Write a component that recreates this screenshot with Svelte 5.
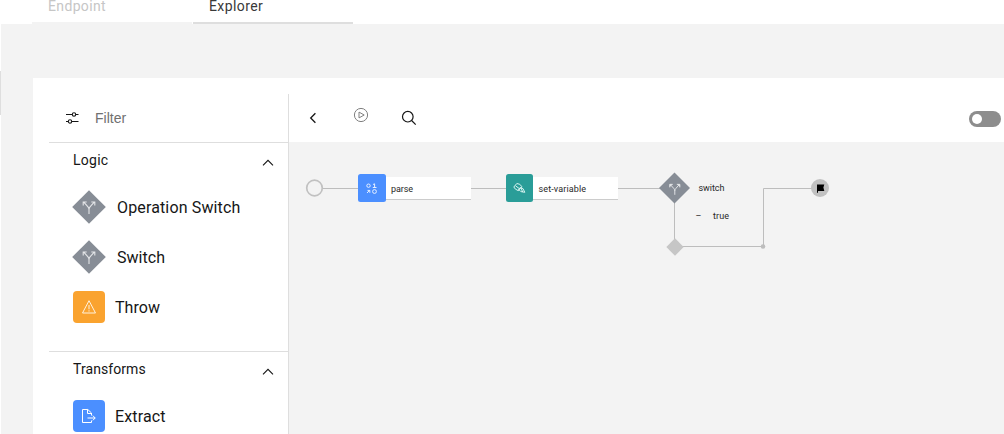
<script>
  const sections = [
    {
      title: 'Logic',
      spacing: 0.25,
      items: [
        { label: 'Operation Switch', icon: 'switch', spacing: 0.14 },
        { label: 'Switch', icon: 'switch', spacing: 0.05 },
        { label: 'Throw', icon: 'throw', spacing: 0.05 }
      ]
    },
    { title: 'Transforms', spacing: 0.08, items: [{ label: 'Extract', icon: 'extract', spacing: 0.15 }] }
  ];
</script>

{#snippet fork()}
  <path d="M0 7V2.5Q0 1 -1.2 -.3L-5 -4.6M0 2.5Q0 1 1.2 -.3L5 -4.6M-5.8 -1.5V-5H-2.3M2.3 -5H5.8V-1.5" fill="none" stroke="#e4e6e8" stroke-width="1.1" />
{/snippet}

<div class="app">
  <header>
    <div class="tab disabled">Endpoint</div>
    <div class="tab active">Explorer</div>
  </header>
  <div class="workspace">
    <div class="rail"><i></i></div>
    <div class="panel">
      <aside>
        <div class="filter">
          <svg width="14" height="14" viewBox="0 0 14 14" fill="none" stroke="#161616" stroke-width="1.1">
            <path d="M0 3.5H6M10 3.5H12.5M0 10.5H2M6 10.5H12.5" /><circle cx="8" cy="3.5" r="1.7" /><circle cx="4" cy="10.5" r="1.7" />
          </svg>
          <span>Filter</span>
        </div>
        {#each sections as section}
          <section>
            <h2><span style="letter-spacing: {section.spacing}px">{section.title}</span>
              <svg width="12" height="8" viewBox="0 0 12 8" fill="none" stroke="#161616" stroke-width="1.1"><path d="M1 6.3L6 1.3L11 6.3" /></svg>
            </h2>
            {#each section.items as item}
              <div class="item" class:diamond={item.icon === 'switch'}>
                {#if item.icon === 'switch'}
                  <svg width="34" height="34" viewBox="-17 -17 34 34">
                    <path d="M0 -16.8L16.8 0L0 16.8L-16.8 0Z" fill="#878d96" />{@render fork()}
                  </svg>
                {:else if item.icon === 'throw'}
                  <svg width="32" height="32" viewBox="0 0 32 32" fill="none" stroke="#fff2df">
                    <rect width="32" height="32" rx="4" fill="#faa32f" stroke="none" />
                    <path d="M16 9.7L22.5 22H9.5Z M16 14V18.3M16 19.3V20.5" />
                  </svg>
                {:else}
                  <svg width="32" height="32" viewBox="0 0 32 32" fill="none" stroke="#fff">
                    <rect width="32" height="32" rx="4" fill="#4b8fff" stroke="none" />
                    <path d="M18.5 20.5V22.5H9.5V9.5H14.8L18.5 13V15.5M14.5 9.5V13.5H18.5M14.5 18H22.2M19.8 15.6L22.2 18L19.8 20.4" />
                  </svg>
                {/if}
                <span style="letter-spacing: {item.spacing}px">{item.label}</span>
              </div>
            {/each}
          </section>
        {/each}
      </aside>
      <main>
        <div class="toolbar">
          <svg class="back" width="8" height="12" viewBox="0 0 8 12" fill="none" stroke="#161616" stroke-width="1.3"><path d="M6.4 1.2L1.7 6L6.4 10.8" /></svg>
          <svg class="play" width="16" height="16" viewBox="0 0 16 16" fill="none" stroke="#808080"><circle cx="8" cy="8" r="6.6" /><path d="M6 5.1L11.2 8L6 10.9Z" /></svg>
          <svg class="search" width="16" height="16" viewBox="0 0 16 16" fill="none" stroke="#161616" stroke-width="1.2"><circle cx="6.8" cy="6.7" r="5.3" /><path d="M10.6 10.5L14.7 14.6" /></svg>
          <div class="toggle"><i></i></div>
        </div>
        <svg class="flow" width="715" height="292" viewBox="289 142 715 292">
          <g fill="none" stroke="#bdbdbd">
            <path d="M323 188.5H358M471 188.5H506M618 188.5H660M674.5 203V240M682 246.5H763.5V188.5H812" />
            <circle cx="314.5" cy="188" r="7.8" stroke="#c1c1c1" stroke-width="1.7" />
          </g>
          <g class="card">
            <rect x="380" y="177" width="91" height="22" /><rect x="530" y="177" width="88" height="22" />
          </g>
          <rect x="358" y="174" width="28" height="28" rx="2.5" fill="#4b8fff" />
          <g fill="none" stroke="#e6f0ff" stroke-width="1">
            <circle cx="368.5" cy="185.7" r="1.7" /><circle cx="374.5" cy="191.5" r="1.9" />
            <path d="M373 184.5L374.6 183.8V187.5M372.8 187.5H376.5M367 193L369.7 190.2M367.5 190.4H369.8V192.8" />
          </g>
          <rect x="506" y="174" width="27" height="28" rx="2.5" fill="#2a9d98" />
          <g fill="none" stroke="#d8f4f1" stroke-width="1" stroke-linejoin="round">
            <path d="M513.8 187L516.8 183.5L519.8 184.3L522 186.8L518.2 190.6L515.5 189.2ZM515.5 185.8L519 188.4M518.2 190.6L520 187.6L523 188.6L524.8 192.3L520.8 191.6L518.8 189.5M521 188L522.7 192" />
          </g>
          <path d="M674.5 172.5L690 188L674.5 203.5L659 188Z" fill="#878d96" />
          <g transform="translate(674.8 188.7) scale(.87)">{@render fork()}<path d="M-5.8 -5H-2.8L-5.8 -2ZM5.8 -5H2.8L5.8 -2Z" fill="#e4e6e8" /></g>
          <path d="M675 238.2L683.7 247L675 255.8L666.3 247Z" fill="#c6c6c6" />
          <circle cx="763" cy="246.5" r="2.3" fill="#bdbdbd" />
          <circle cx="820" cy="188" r="9" fill="#c1c1c1" />
          <path d="M817 184.5H824.3L823.4 187.5L824.3 191H818V192.7H817Z" fill="#000" />
          <g class="labels">
            <text x="391" y="192" textLength="22">parse</text>
            <text x="538.5" y="192" textLength="47.5">set-variable</text>
            <text x="698.5" y="191" textLength="26">switch</text>
            <text x="695.5" y="219">–</text>
            <text x="713" y="219" textLength="16">true</text>
          </g>
        </svg>
      </main>
    </div>
  </div>
</div>

<style>
  :global(body) { background: #fff; overflow: hidden; }
  .app { width: 1004px; height: 434px; overflow: hidden; font-family: Roboto, sans-serif; color: #161616; display: flex; flex-direction: column; }
  header { height: 24px; display: flex; flex: none; gap: 1px; padding-left: 32px; box-sizing: border-box; }
  .tab { width: 160px; height: 24px; box-sizing: border-box; padding-left: 16px; font-size: 14px; line-height: 13px; border-bottom: 2px solid #f3f3f3; }
  .disabled { color: #c6c6c6; letter-spacing: .35px; }
  .active { color: #393939; border-bottom-color: #dedede; letter-spacing: .4px; }
  .workspace { display: flex; height: 410px; background: #f3f3f3; }
  .rail { width: 1px; margin-right: 32px; background: #fff; padding-top: 47px; box-sizing: border-box; }
  .rail i { display: block; height: 44px; background: #dedede; }
  .panel { width: 971px; height: 356px; margin-top: 54px; display: flex; background: #fff; }
  aside { width: 240px; height: 340px; margin: 16px 0 0 16px; box-sizing: border-box; border-right: 1px solid #dedede; overflow: hidden; }
  .filter { height: 48px; display: flex; align-items: center; padding-left: 17px; gap: 15px; font: 14px "Liberation Sans", sans-serif; color: #707070; }
  section { border-top: 1px solid #dedede; height: 209px; box-sizing: border-box; }
  h2 { margin: 0; height: 39px; display: flex; justify-content: space-between; padding: 0 14px 0 24px; font-size: 14px; line-height: 35px; font-weight: 400; }
  h2 svg { margin-top: 16px; }
  .item { height: 50px; display: flex; align-items: center; gap: 10px; padding-left: 24px; font-size: 16px; }
  .item.diamond { padding-left: 23px; gap: 11px; }
  main { width: 715px; }
  .toolbar { height: 64px; display: flex; align-items: flex-start; box-sizing: border-box; padding: 0 3px 0 20px; }
  .back { margin-top: 34px; }
  .play { margin: 29px 0 0 36px; }
  .search { margin: 32px 0 0 32px; }
  .toggle { width: 32px; height: 16px; box-sizing: border-box; border-radius: 8px; background: #8d8d8d; margin: 33px 0 0 auto; padding: 3px; }
  .toggle i { display: block; width: 10px; height: 10px; border-radius: 50%; background: #fff; }
  .flow { display: block; background: #f3f3f3; }
  .card rect { fill: #fff; filter: drop-shadow(0.5px 1px 0.5px #ccc); }
  .labels { font-size: 9px; fill: #282828; }
</style>
